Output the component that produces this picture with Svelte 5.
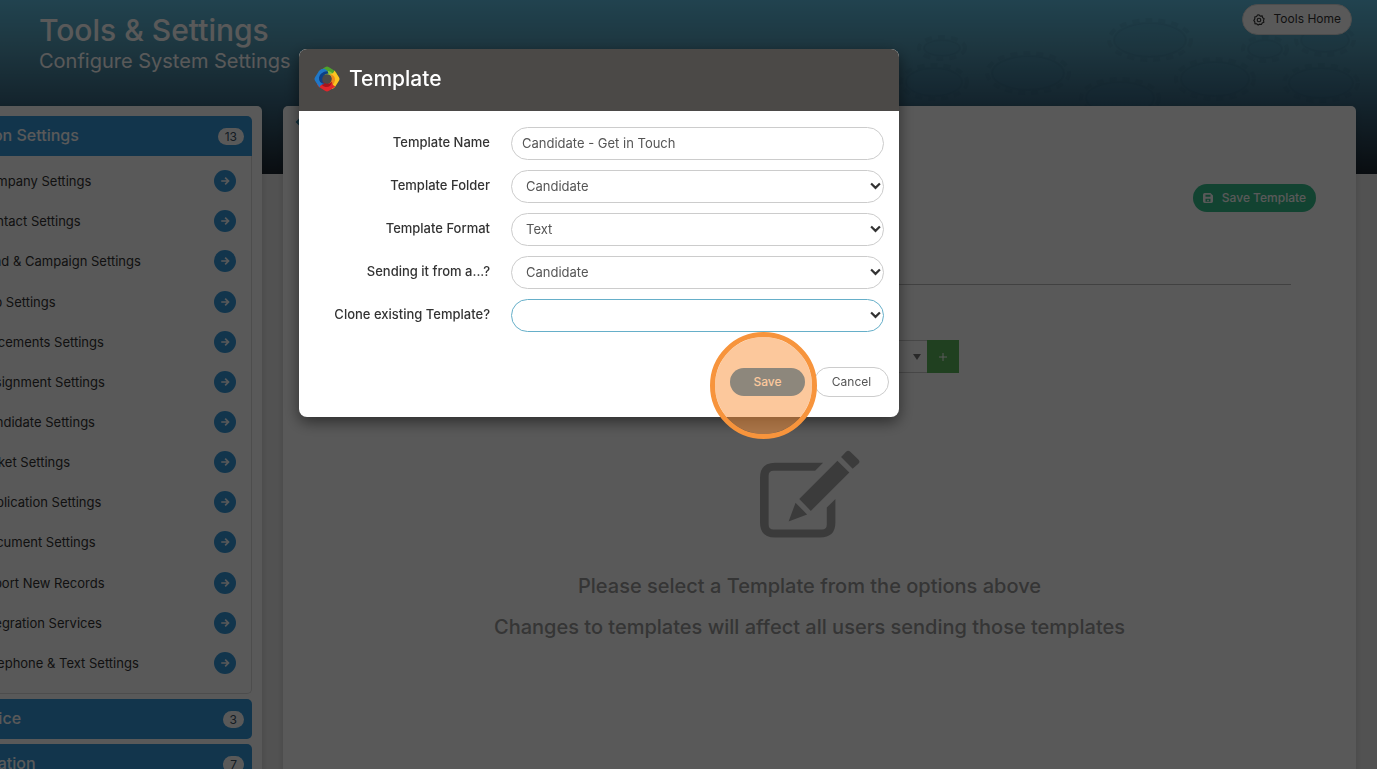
<script>
  const settings = [
    'Company Settings',
    'Contact Settings',
    'Lead & Campaign Settings',
    'Job Settings',
    'Placements Settings',
    'Assignment Settings',
    'Candidate Settings',
    'Ticket Settings',
    'Application Settings',
    'Document Settings',
    'Import New Records',
    'Integration Services',
    'Telephone & Text Settings'
  ];
  const gears = [
    [1150, 40, 36, 17], [1028, 73, 36, 17], [934, 82, 28, 14], [942, 48, 18, 8],
    [1215, 79, 34, 17], [1265, 49, 17, 9], [1321, 83, 32, 15], [1120, 98, 34, 16], [1325, 40, 24, 12]
  ];
  const petals = [
    { turn: 0, outer: '#4fa32c', inner: '#8fc63d' },
    { turn: 90, outer: '#fbc421', inner: '#ee8a1c' },
    { turn: 180, outer: '#e0262b', inner: '#a8141c' },
    { turn: 270, outer: '#1f78c8', inner: '#0d3f86' }
  ];
  let name = $state('Candidate - Get in Touch');
  let folder = $state('Candidate');
  let format = $state('Text');
  let source = $state('Candidate');
  let clone = $state('');
</script>

{#snippet chevron()}
  <svg class="chevron" viewBox="0 0 10 7" aria-hidden="true"><path d="M1 1.2 5 5.2 9 1.2" /></svg>
{/snippet}

<div class="page">
  <header class="banner">
    <svg class="gears" viewBox="0 0 1377 174" preserveAspectRatio="xMaxYMin slice" aria-hidden="true">
      {#each gears as [cx, cy, rx, ry]}
        <ellipse {cx} {cy} {rx} {ry} />
        <ellipse class="teeth" {cx} {cy} rx={rx + 5} ry={ry + 3} />
      {/each}
    </svg>
    <div class="titles">
      <h1>Tools &amp; Settings</h1>
      <p>Configure System Settings</p>
    </div>
    <button class="pill home" type="button">
      <svg viewBox="0 0 16 16" width="12" height="12" aria-hidden="true">
        <path d="M8 1.2 9.8 2.8 12.2 2.6 12.8 5 14.8 6.4 14 8.7 14.5 11 12.3 11.9 11.2 14 8.800 13.6 6.8 14.8 5 13.2 2.6 12.9 2.4 10.5 1.1 8.5 2.4 6.5 2.4 4 4.8 3.4 6 1.4Z" />
        <circle cx="8" cy="8" r="2.4" />
      </svg>
      <span>Tools Home</span>
    </button>
  </header>

  <div class="columns">
    <nav class="panel sidebar">
      <section>
        <h2>Action Settings <span class="count">13</span></h2>
        <ul>
          {#each settings as item}
            <li>
              <a href="#settings"><span>{item}</span>
                <span class="go">
                  <svg viewBox="0 0 12 12" width="10" height="10" aria-hidden="true"><path d="M1.5 6h8.500M6.2 2 10.2 6 6.2 10" /></svg>
                </span>
              </a>
            </li>
          {/each}
        </ul>
      </section>
      <h2 class="closed">Service <span class="count">3</span></h2>
      <h2 class="closed">Migration <span class="count">7</span></h2>
    </nav>

    <main class="panel content">
      <a class="back" href="#back" aria-label="Back">
        <svg viewBox="0 0 8 12" width="8" height="12" aria-hidden="true"><path d="M7 1 2 6l5 5" /></svg>
      </a>
      <div class="actions">
        <button class="pill save-template" type="button">
          <svg viewBox="0 0 12 12" width="10" height="10" aria-hidden="true">
            <path fill-rule="evenodd" d="M2 0h7l3 3v7a2 2 0 0 1-2 2H2a2 2 0 0 1-2-2V2a2 2 0 0 1 2-2Zm1 2v2.500h6V2Zm0 5v3.500h6V7Z" />
            <path d="M5 8h2v2H5z" />
          </svg>
          <span>Save Template</span>
        </button>
      </div>
      <hr />
      <div class="picker">
        <button class="combo" type="button" aria-label="Select template"><span class="caret"></span></button>
        <button class="add" type="button" aria-label="Add template">
          <svg viewBox="0 0 8 8" width="8" height="8" aria-hidden="true"><path d="M4 0v8M0 4h8" /></svg>
        </button>
      </div>
      <div class="empty">
        <svg viewBox="58 31 301 264" width="100" height="88" aria-hidden="true">
          <path d="M248 69H103Q58 69 58 114V249Q58 294 103 294H239Q285 294 285 249V178L259 204V255Q259 270 244 270H99Q84 270 84 255V108Q84 93 99 93H224Z" />
          <path d="M291 63 327 98 211 214 176 178ZM165 189 200 225 144 246ZM302 52 317 36Q323 29 330 36L354 59Q361 66 354 72L337 87Z" />
        </svg>
        <p>Please select a Template from the options above</p>
        <p>Changes to templates will affect all users sending those templates</p>
      </div>
    </main>
  </div>
</div>

<div class="backdrop"></div>

<div class="modal" role="dialog" aria-labelledby="modal-title">
  <div class="modal-head">
    <svg viewBox="0 0 26 26" width="26" height="26" aria-hidden="true">
      {#each petals as { turn, outer, inner }}
        <g transform="rotate({turn} 13 13)">
          <path fill={outer} d="M4.500 5.500 11 1.2Q13-.2 15 1.2L21 5Q23.500 7 23.200 10.500L21 13.500Q19 7.800 13.500 7.500 9.500 7.500 8 10.500Q8 6.500 4.500 5.500Z" />
          <path fill={inner} d="M8 10.500Q9 4.500 14.500 5 20 6 21 13.500L18.600 14.500Q18 8.500 13 8.200 9.500 8 8 10.500Z" />
        </g>
      {/each}
    </svg>
    <h2 id="modal-title">Template</h2>
  </div>
  <form>
    <div class="fields">
      <label for="name">Template Name</label>
      <input id="name" type="text" bind:value={name} />

      <label for="folder">Template Folder</label>
      <div class="choice">
        <select id="folder" bind:value={folder}><option>Candidate</option></select>{@render chevron()}
      </div>

      <label for="format">Template Format</label>
      <div class="choice">
        <select id="format" bind:value={format}><option>Text</option></select>{@render chevron()}
      </div>

      <label for="source">Sending it from a...?</label>
      <div class="choice">
        <select id="source" bind:value={source}><option>Candidate</option></select>{@render chevron()}
      </div>

      <label for="clone">Clone existing Template?</label>
      <div class="choice">
        <select id="clone" class="active" bind:value={clone}><option value=""></option></select>{@render chevron()}
      </div>
    </div>
    <div class="buttons">
      <div class="target">
        <button class="pill save" type="button">Save</button>
        <span class="ring"></span>
      </div>
      <button class="pill cancel" type="button">Cancel</button>
    </div>
  </form>
</div>

<style>
  :global(body) {
    background: #ebebeb;
    overflow: hidden;
  }
  .page,
  .modal {
    font-family: Inter, "Liberation Sans", sans-serif;
    font-size: 13px;
    line-height: 20px;
    color: #333;
  }
  .page *,
  .modal * {
    box-sizing: border-box;
  }
  .page {
    height: 100vh;
    overflow: hidden;
  }
  button,
  input,
  select {
    font: inherit;
  }
  h1,
  h2,
  p,
  ul {
    margin: 0;
    padding: 0;
    font-weight: 500;
  }
  .banner {
    position: relative;
    display: flex;
    justify-content: space-between;
    align-items: flex-start;
    height: 174px;
    padding: 4px 25px 0 39px;
    background: linear-gradient(#5fbfe2 0, #559db8 45px, #3b6a84 100px, #1c2630 174px);
  }
  .gears {
    position: absolute;
    inset: 0;
    width: 100%;
    height: 100%;
    fill: rgba(40, 120, 160, 0.07);
    stroke: rgba(10, 60, 90, 0.07);
    stroke-width: 2;
  }
  .teeth {
    fill: none;
    stroke-width: 4;
    stroke-dasharray: 7 6;
  }
  .titles {
    position: relative;
    padding-top: 8px;
    color: #fff;
  }
  h1 {
    font-size: 30px;
    line-height: 36px;
  }
  .titles p {
    font-size: 20px;
    line-height: 26px;
    font-weight: 400;
  }
  .pill {
    display: inline-flex;
    align-items: center;
    justify-content: center;
    border: 0;
    border-radius: 16px;
    padding: 0 10px 1px;
    height: 28px;
    font-size: 12px;
    white-space: nowrap;
  }
  .home {
    position: relative;
    height: 31px;
    gap: 9px;
    padding: 0 10px 2px;
    border: 1px solid #ddd;
    background: #fff;
    color: #333;
  }
  .home svg {
    margin-top: 2px;
    fill: none;
    stroke: #333;
    stroke-width: 1.5;
  }
  .columns {
    position: relative;
    display: grid;
    grid-template-columns: 320px 1fr;
    gap: 21px;
    margin: -68px 21px 0 -58px;
  }
  .panel {
    background: #fff;
    border-radius: 5px;
    min-height: calc(100vh - 106px);
    box-shadow: 0 2px 6px rgba(0, 0, 0, 0.15);
  }
  .sidebar {
    padding: 10px 10px 0;
  }
  .sidebar h2 {
    display: flex;
    justify-content: space-between;
    align-items: center;
    height: 40px;
    padding: 0 8px 2px 11px;
    border-radius: 5px 5px 0 0;
    background: #3498db;
    color: #fff;
    font-size: 16px;
  }
  .sidebar .closed {
    margin-top: 5px;
    border-radius: 5px;
  }
  .count {
    margin-top: 3px;
    padding: 0 7px;
    border-radius: 9px;
    background: #fff;
    color: #3a5166;
    font-size: 12px;
    line-height: 17px;
    font-weight: 400;
  }
  ul {
    display: grid;
    grid-auto-rows: 1fr;
    min-height: 538px;
    padding: 5px 15px 10px 26px;
    border: 1px solid #ddd;
    border-top: 0;
    border-radius: 0 0 5px 5px;
    list-style: none;
  }
  li {
    display: grid;
    align-items: center;
    font-weight: 400;
  }
  li a {
    display: flex;
    justify-content: space-between;
    align-items: center;
    color: #333;
    text-decoration: none;
  }
  .go {
    display: grid;
    place-items: center;
    width: 22px;
    height: 22px;
    border-radius: 50%;
    background: #3498db;
  }
  .go svg,
  .add svg,
  .back svg {
    fill: none;
    stroke: #fff;
    stroke-width: 2;
  }
  .content {
    padding: 10px 40px 0 12px;
  }
  .back {
    display: block;
    height: 12px;
    line-height: 12px;
  }
  .back svg {
    display: block;
    stroke: #2a86a8;
  }
  .actions {
    display: flex;
    justify-content: flex-end;
    padding-top: 56px;
  }
  .save-template {
    gap: 9px;
    background: #34bf8d;
    color: #fff;
    font-weight: 500;
  }
  .save-template svg {
    fill: #fff;
  }
  hr {
    margin: 72px 25px 0 33px;
    border: 0;
    border-top: 1px solid #bbb;
  }
  .picker {
    display: flex;
    width: 631px;
    margin: 55px 0 0 33px;
  }
  .combo {
    flex: 1;
    display: flex;
    justify-content: flex-end;
    align-items: center;
    height: 33px;
    padding: 0 6px;
    border: 1px solid #ccc;
    border-right: 0;
    background: #fff;
  }
  .caret {
    border: 4px solid transparent;
    border-top: 6px solid #777;
    border-bottom: 0;
  }
  .add {
    display: grid;
    place-items: center;
    width: 32px;
    height: 33px;
    padding: 0;
    border: 0;
    background: #5cb85c;
  }
  .add svg {
    stroke-width: 1;
  }
  .empty {
    margin: 77px 25px 0 33px;
    text-align: center;
    color: #999;
    font-size: 20px;
    line-height: 26px;
  }
  .empty svg {
    display: block;
    margin: 0 auto 35px;
    fill: #aaa;
  }
  .empty p + p {
    margin-top: 15px;
  }
  .backdrop {
    position: fixed;
    inset: 0;
    background: rgba(0, 0, 0, 0.65);
  }
  .modal {
    position: fixed;
    left: 299px;
    top: 49px;
    width: 600px;
    border-radius: 8px;
    background: #fff;
    box-shadow: 0 5px 15px rgba(0, 0, 0, 0.5);
  }
  .modal-head {
    display: flex;
    align-items: center;
    gap: 9px;
    height: 62px;
    padding: 0 15px 2px;
    border-radius: 8px 8px 0 0;
    background: #4b4947;
    color: #fff;
  }
  .modal-head h2 {
    font-size: 21px;
    line-height: 28px;
  }
  .fields {
    display: grid;
    grid-template-columns: 176px 1fr;
    gap: 10px 21px;
    padding: 16px 15px 0;
  }
  label {
    padding-top: 5px;
    text-align: right;
    font-weight: 500;
  }
  input,
  select {
    display: block;
    width: 100%;
    height: 33px;
    padding: 0 10px 2px;
    border: 1px solid #ccc;
    border-radius: 17px;
    background: #fff;
    color: #555;
    outline: 0;
  }
  select {
    appearance: none;
    padding: 0 14px 2px;
  }
  .active {
    border-color: #66afc9;
  }
  .choice {
    position: relative;
  }
  .chevron {
    position: absolute;
    right: 3px;
    top: 12px;
    width: 11px;
    height: 8px;
    fill: none;
    stroke: #333;
    stroke-width: 2;
    pointer-events: none;
  }
  .buttons {
    display: flex;
    justify-content: flex-end;
    align-items: center;
    gap: 9px;
    padding: 35px 10px 20px;
  }
  .target {
    position: relative;
    display: flex;
  }
  .save,
  .cancel {
    width: 75px;
  }
  .save {
    background: #207cbe;
    color: #fff;
    font-weight: 500;
  }
  .cancel {
    height: 30px;
    border: 1px solid #ccc;
    background: #fff;
    color: #555;
  }
  .ring {
    position: absolute;
    z-index: 1;
    left: -20px;
    top: -36px;
    width: 107px;
    height: 107px;
    border: 5px solid #f7943c;
    border-radius: 50%;
    background: rgba(250, 146, 58, 0.5);
    background-clip: padding-box;
    pointer-events: none;
  }
</style>
